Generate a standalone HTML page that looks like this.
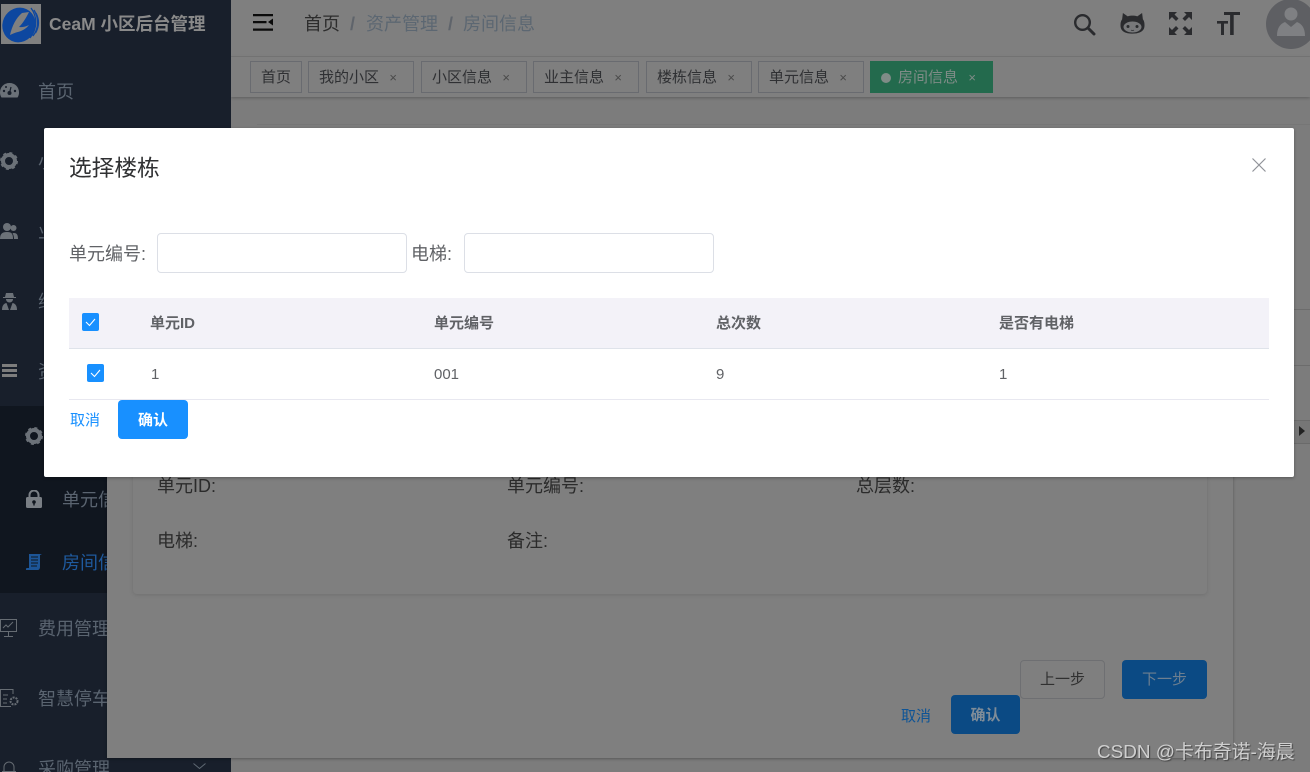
<!DOCTYPE html>
<html lang="zh">
<head>
<meta charset="utf-8">
<title>房间信息</title>
<style>
html,body{margin:0;padding:0;width:1310px;height:772px;overflow:hidden;background:#7f7f7f}
body{position:relative;font-family:"Liberation Sans","Noto Sans CJK SC",sans-serif}
.a{position:absolute;white-space:nowrap}
.t{position:absolute;white-space:nowrap;line-height:24px;height:24px}
.m{font-size:18px;color:#5a6470}
.tag{position:absolute;top:61px;height:32px;box-sizing:border-box;border:1px solid #696b70;font-size:15px;line-height:32px;color:#2f3033;padding-left:10px}
.tag i{position:absolute;right:16px;top:0;font-style:normal;font-size:13px;color:#4a4a4a}
.lbl{font-size:18px;color:#2b2b2b}
.cb{position:absolute;width:17px;height:18px;background:#1890ff;border-radius:2px}
.th{position:absolute;top:312px;font-size:15px;font-weight:bold;color:#606266;line-height:24px}
.td{position:absolute;top:363px;font-size:15px;color:#606266;line-height:24px}
input{position:absolute;box-sizing:border-box;border:1px solid #dcdfe6;border-radius:4px;background:#fff;height:40px;width:250px;top:233px;margin:0;padding:0}
</style>
</head>
<body>

<!-- main area -->
<div class="a" style="left:231px;top:0;width:1079px;height:772px;background:#7c7c7c"></div>
<div class="a" style="left:231px;top:0;width:1079px;height:56px;background:#7f7f7f;border-bottom:1px solid #777"></div>
<div class="a" style="left:231px;top:57px;width:1079px;height:40px;background:#7f7f7f;box-shadow:0 1px 3px rgba(0,0,0,.25)"></div>
<div class="a" style="left:257px;top:124px;width:1053px;height:1px;background:#767676"></div>
<div class="a" style="left:1233px;top:309px;width:77px;height:1px;background:#6c6c6c"></div>
<div class="a" style="left:1233px;top:365px;width:77px;height:1px;background:#6c6c6c"></div>
<div class="a" style="left:1294px;top:420px;width:16px;height:22px;background:#767676;border-top:1px solid #6a6a6a;border-bottom:1px solid #6a6a6a"></div>
<div class="a" style="left:1299px;top:426px;width:0;height:0;border-left:6px solid #222;border-top:5px solid transparent;border-bottom:5px solid transparent"></div>

<!-- hamburger -->
<svg class="a" style="left:253px;top:14px" width="20" height="17" viewBox="0 0 20 17"><path d="M0 0h20v2.300H0zM0 7h13.500v2.300H0zM0 14.500h20v2.300H0z" fill="#0b0b0b"/><path d="M20 4.500v7L15 8z" fill="#0b0b0b"/></svg>

<!-- breadcrumb -->
<div class="t" style="left:304px;top:12px;font-size:18px;color:#2d2d2d">首页</div>
<div class="t" style="left:350px;top:12px;font-size:18px;color:#5f646b;font-weight:bold">/</div>
<div class="t" style="left:366px;top:12px;font-size:18px;color:#5c6772">资产管理</div>
<div class="t" style="left:448px;top:12px;font-size:18px;color:#5f646b;font-weight:bold">/</div>
<div class="t" style="left:463px;top:12px;font-size:18px;color:#5c6772">房间信息</div>

<!-- header icons -->
<svg class="a" style="left:1073px;top:13px" width="23" height="23" viewBox="0 0 23 23"><circle cx="9.500" cy="9.500" r="7.300" fill="none" stroke="#2a2b2e" stroke-width="2.400"/><path d="M15 15l6 6" stroke="#2a2b2e" stroke-width="3" stroke-linecap="round"/></svg>
<svg class="a" style="left:1120px;top:12px" width="25" height="23" viewBox="0 0 25 23"><path d="M2.500 1l5 3.500c3-1 7-1 10 0l5-3.500.8 6.500c1.500 2 1.700 4 1.700 6.500 0 6-5 8.500-12.500 8.500S0 20 0 14c0-2.500.2-4.500 1.700-6.500z" fill="#2a2b2e" transform="translate(.5 0) scale(.96)"/><ellipse cx="12.500" cy="15" rx="9" ry="5.500" fill="#77787a"/><circle cx="8" cy="14.500" r="1.500" fill="#2a2b2e"/><circle cx="17" cy="14.500" r="1.500" fill="#2a2b2e"/><path d="M11 18c1 .8 2 .8 3 0" stroke="#2a2b2e" stroke-width=".8" fill="none"/></svg>
<svg class="a" style="left:1169px;top:12px" width="24" height="23" viewBox="0 0 24 23" fill="#2a2b2e"><path d="M0 0h8L5.500 2.500 9.500 6.500 7 9 3 5 0 8zM23 0h-8l2.500 2.500-4 4L16 9l4-4 3 3zM0 23h8l-2.500-2.500 4-4L7 14l-4 4-3-3zM23 23h-8l2.500-2.500-4-4L16 14l4 4 3-3z"/></svg>
<svg class="a" style="left:1217px;top:12px" width="24" height="23" viewBox="0 0 24 23" fill="#2a2b2e"><path d="M7 0h16v3h-6.300v20h-3.600V3H7zM0 9h11v2.600H7v11.400H4V11.600H0z"/></svg>
<!-- avatar -->
<div class="a" style="left:1266px;top:-1px;width:44px;height:50px;overflow:hidden">
  <svg width="60" height="50" viewBox="0 0 60 50"><circle cx="25" cy="25" r="25" fill="#5e5f63"/><circle cx="25" cy="15" r="6.500" fill="#7f8083"/><path d="M11 37c0-8 3-12 8-14l6 5 6-5c5 2 8 6 8 14z" fill="#7f8083"/></svg>
</div>

<!-- tags -->
<div class="tag" style="left:250px;width:52px">首页</div>
<div class="tag" style="left:308px;width:106px">我的小区<i>×</i></div>
<div class="tag" style="left:421px;width:106px">小区信息<i>×</i></div>
<div class="tag" style="left:533px;width:106px">业主信息<i>×</i></div>
<div class="tag" style="left:646px;width:106px">楼栋信息<i>×</i></div>
<div class="tag" style="left:758px;width:106px">单元信息<i>×</i></div>
<div class="tag" style="left:870px;width:123px;background:#236a4d;border-color:#236a4d;color:#7f8c87;padding-left:27px">房间信息<i style="color:#7f8c87">×</i></div>
<div class="a" style="left:881px;top:73px;width:10px;height:10px;border-radius:50%;background:#7f8c87"></div>

<!-- sidebar -->
<div class="a" style="left:0;top:0;width:231px;height:772px;background:#181f2b;overflow:hidden">
  <div class="a" style="left:0;top:406px;width:231px;height:187px;background:#10161f"></div>
  <svg class="a" style="left:1px;top:4px" width="40" height="40" viewBox="0 0 40 40"><rect width="40" height="40" fill="#808080"/><ellipse cx="18" cy="21" rx="16.500" ry="17.500" fill="#0d47a0" transform="rotate(25 18 21)"/><path d="M9 31C11 22 15 14 21 9l7-1c-3 6-6 11-10 15 3 .5 6 0 10-2-3 4-8 6.500-13 7.500-2 .6-4 1.500-6 2.500z" fill="#808080"/><path d="M30 4c6 8 7 20-1 30M33 6c5 8 5 18-1 26M35 9c3.500 7 3 14-.5 20" stroke="#0d47a0" stroke-width="1.300" fill="none"/></svg>
  <div class="t" style="left:49px;top:12px;font-size:17.500px;font-weight:bold;color:#8a8a8a">CeaM 小区后台管理</div>

  <svg class="a" style="left:0;top:83px" width="19" height="15" viewBox="0 0 19 15"><path d="M9.500 0C4 0 0 4 0 9.500c0 2 .6 3.800 1.500 5h16c.9-1.200 1.500-3 1.500-5C19 4 15 0 9.500 0z" fill="#6b7178"/><circle cx="9.500" cy="10" r="2" fill="#181f2b"/><path d="M9.500 10l1.500-6" stroke="#181f2b" stroke-width="1.200"/><circle cx="4" cy="8" r="1.200" fill="#181f2b"/><circle cx="15" cy="8" r="1.200" fill="#181f2b"/><circle cx="6" cy="4" r="1" fill="#181f2b"/></svg>
  <div class="t m" style="left:38px;top:80px">首页</div>

  <svg class="a" style="left:0;top:152px" width="18" height="18" viewBox="0 0 18 18"><circle cx="9" cy="9" r="6" fill="none" stroke="#6b7178" stroke-width="4"/><circle cx="9" cy="9" r="8" fill="none" stroke="#6b7178" stroke-width="2" stroke-dasharray="3 3.300"/></svg>
  <div class="t m" style="left:38px;top:150px">小区管理</div>

  <svg class="a" style="left:0;top:222px" width="18" height="18" viewBox="0 0 18 18"><circle cx="7" cy="5" r="4" fill="#6b7178"/><path d="M0 17c0-5 2-7 7-7s6 2 6 7z" fill="#6b7178"/><circle cx="13.500" cy="6" r="3" fill="#6b7178"/><path d="M14 17h4c0-4-1-6-4-6-1 0-1.500.3-1.500.3 1 1.500 1.500 3.500 1.500 5.700z" fill="#6b7178"/></svg>
  <div class="t m" style="left:38px;top:220px">业主信息</div>

  <svg class="a" style="left:2px;top:292px" width="15" height="18" viewBox="0 0 15 18"><path d="M4 1h7l1 4h2v1H1V5h2z" fill="#6b7178"/><path d="M4 7h7c0 2-1.500 3.500-3.500 3.500S4 9 4 7z" fill="#6b7178"/><path d="M0 18c0-4 1.500-6.500 4.500-7L7 18zM15 18c0-4-1.500-6.500-4.500-7L8 18z" fill="#6b7178"/></svg>
  <div class="t m" style="left:38px;top:290px">维修管理</div>

  <svg class="a" style="left:2px;top:364px" width="15" height="13" viewBox="0 0 15 13" fill="#7d7d7d"><path d="M0 0h15v3H0zM0 5h15v3H0zM0 10h15v3H0z"/></svg>
  <div class="t m" style="left:38px;top:360px">资产管理</div>

  <svg class="a" style="left:25px;top:427px" width="18" height="18" viewBox="0 0 18 18"><circle cx="9" cy="9" r="6" fill="none" stroke="#6b7178" stroke-width="4"/><circle cx="9" cy="9" r="8" fill="none" stroke="#6b7178" stroke-width="2" stroke-dasharray="3 3.300"/></svg>
  <div class="t m" style="left:62px;top:425px">楼栋信息</div>

  <svg class="a" style="left:26px;top:490px" width="16" height="18" viewBox="0 0 16 18"><path d="M3.500 8V5a4.500 4.500 0 0 1 9 0v3" fill="none" stroke="#7a7f85" stroke-width="2"/><rect y="7" width="16" height="11" rx="1.500" fill="#7a7f85"/><circle cx="8" cy="12" r="1.800" fill="#10161f"/><rect x="7.300" y="12" width="1.400" height="3.500" fill="#10161f"/></svg>
  <div class="t m" style="left:62px;top:488px">单元信息</div>

  <svg class="a" style="left:26px;top:554px" width="16" height="16" viewBox="0 0 16 16"><path d="M3 0h13l-2 1v12c0 1.500-1 3-2 3H0c-.5-1 0-2 1.500-2H3z" fill="#1d5596"/><path d="M5 3h7M5 6h7M5 9h7M5 12h6" stroke="#10161f" stroke-width="1"/></svg>
  <div class="t" style="left:62px;top:551px;font-size:18px;color:#1f5a9e">房间信息</div>

  <svg class="a" style="left:0;top:619px" width="18" height="18" viewBox="0 0 18 18" fill="none" stroke="#666c73" stroke-width="1"><rect x=".5" y=".5" width="16" height="12"/><path d="M8.500 13v4M4 17.500h9M3 9l3-3 2 2 5-5"/></svg>
  <div class="t m" style="left:38px;top:617px">费用管理</div>

  <svg class="a" style="left:0;top:689px" width="19" height="18" viewBox="0 0 19 18" fill="none" stroke="#666c73" stroke-width="1"><path d="M13 5V.5H.5v17H11M3 6h5M3 10h4M3 14h4"/><circle cx="14" cy="12" r="3.500" stroke-width="2" stroke-dasharray="2 1"/></svg>
  <div class="t m" style="left:38px;top:687px">智慧停车</div>

  <svg class="a" style="left:1px;top:760px" width="16" height="14" viewBox="0 0 16 14" fill="none" stroke="#666c73" stroke-width="1"><path d="M3 11V7a5 5 0 0 1 10 0v4M1 11.500h14"/></svg>
  <div class="t m" style="left:38px;top:757px">采购管理</div>
  <svg class="a" style="left:193px;top:763px" width="13" height="7" viewBox="0 0 13 7"><path d="M.5.500l6 5 6-5" fill="none" stroke="#5f6973"/></svg>
</div>

<!-- lower dialog -->
<div class="a" style="left:107px;top:200px;width:1126px;height:558px;background:#7f7f7f;box-shadow:0 1px 3px rgba(0,0,0,.3)"></div>
<div class="a" style="left:133px;top:220px;width:1074px;height:374px;background:#7f7f7f;border-radius:4px;box-shadow:0 1px 4px rgba(0,0,0,.12)"></div>
<div class="t lbl" style="left:157px;top:474px">单元ID:</div>
<div class="t lbl" style="left:507px;top:474px">单元编号:</div>
<div class="t lbl" style="left:856px;top:474px">总层数:</div>
<div class="t lbl" style="left:157px;top:529px">电梯:</div>
<div class="t lbl" style="left:507px;top:529px">备注:</div>

<div class="a" style="left:1020px;top:660px;width:85px;height:39px;box-sizing:border-box;border:1px solid #6e6f72;border-radius:4px;text-align:center;line-height:38px;font-size:15px;color:#303030">上一步</div>
<div class="a" style="left:1122px;top:660px;width:85px;height:39px;background:#0b4a84;border-radius:4px;text-align:center;line-height:40px;font-size:15px;color:#6d7f90">下一步</div>
<div class="t" style="left:901px;top:705px;font-size:15px;color:#0e5496">取消</div>
<div class="a" style="left:951px;top:695px;width:69px;height:39px;background:#0b4a84;border-radius:4px;text-align:center;line-height:42px;font-size:15px;font-weight:bold;color:#7f8c98">确认</div>

<!-- top dialog -->
<div class="a" style="left:44px;top:128px;width:1250px;height:349px;background:#fff;border-radius:2px;box-shadow:0 1px 3px rgba(0,0,0,.3)"></div>
<div class="t" style="left:69px;top:153px;font-size:22.700px;line-height:30px;height:30px;color:#303133">选择楼栋</div>
<svg class="a" style="left:1252px;top:158px" width="14" height="14" viewBox="0 0 14 14"><path d="M.5.500l13 13M13.500.500l-13 13" stroke="#909399" stroke-width="1.200"/></svg>

<div class="t" style="left:69px;top:242px;font-size:18px;color:#606266">单元编号:</div>
<input type="text" style="left:157px">
<div class="t" style="left:411px;top:242px;font-size:18px;color:#606266">电梯:</div>
<input type="text" style="left:464px">

<div class="a" style="left:69px;top:298px;width:1200px;height:50px;background:#f3f2f8;border-bottom:1px solid #dfe3ea"></div>
<div class="a" style="left:69px;top:399px;width:1200px;height:1px;background:#e8e8f0"></div>
<div class="cb" style="left:82px;top:313px"><svg width="17" height="18" viewBox="0 0 17 18"><path d="M4 9l3.500 3.500L13 6" fill="none" stroke="#fff" stroke-width="1.100"/></svg></div>
<div class="cb" style="left:87px;top:364px"><svg width="17" height="18" viewBox="0 0 17 18"><path d="M4 9l3.500 3.500L13 6" fill="none" stroke="#fff" stroke-width="1.100"/></svg></div>
<div class="th" style="left:150px">单元ID</div>
<div class="th" style="left:434px">单元编号</div>
<div class="th" style="left:716px">总次数</div>
<div class="th" style="left:999px">是否有电梯</div>
<div class="td" style="left:151px">1</div>
<div class="td" style="left:434px">001</div>
<div class="td" style="left:716px">9</div>
<div class="td" style="left:999px">1</div>

<div class="t" style="left:70px;top:409px;font-size:15px;color:#1890ff">取消</div>
<div class="a" style="left:118px;top:400px;width:70px;height:39px;background:#1890ff;border-radius:4px;text-align:center;line-height:42px;font-size:15px;font-weight:bold;color:#fff">确认</div>

<!-- watermark -->
<div class="a" style="left:1097px;top:740px;font-size:18.900px;line-height:26px;color:#cfcfcf;text-shadow:1px 1px 1px #444">CSDN @卡布奇诺-海晨</div>

</body>
</html>
